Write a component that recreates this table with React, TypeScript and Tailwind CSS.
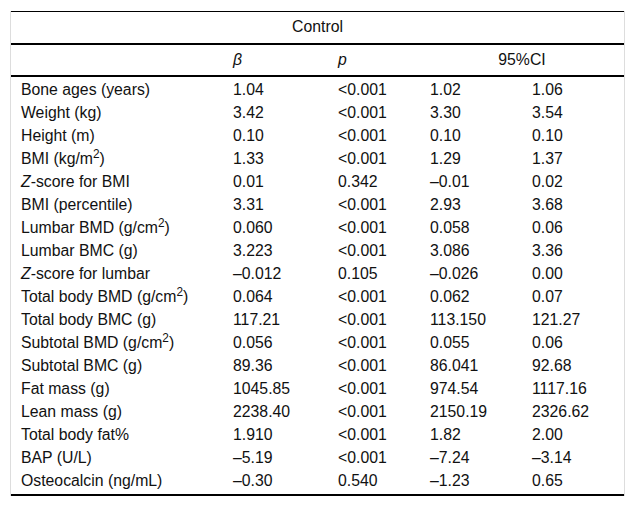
const rows: [React.ReactNode, string, string, string, string][] = [
  ["Bone ages (years)", "1.04", "<0.001", "1.02", "1.06"],
  ["Weight (kg)", "3.42", "<0.001", "3.30", "3.54"],
  ["Height (m)", "0.10", "<0.001", "0.10", "0.10"],
  [<>BMI (kg/m<sup>2</sup>)</>, "1.33", "<0.001", "1.29", "1.37"],
  [<><i>Z</i>-score for BMI</>, "0.01", "0.342", "–0.01", "0.02"],
  ["BMI (percentile)", "3.31", "<0.001", "2.93", "3.68"],
  [<>Lumbar BMD (g/cm<sup>2</sup>)</>, "0.060", "<0.001", "0.058", "0.06"],
  ["Lumbar BMC (g)", "3.223", "<0.001", "3.086", "3.36"],
  [<><i>Z</i>-score for lumbar</>, "–0.012", "0.105", "–0.026", "0.00"],
  [<>Total body BMD (g/cm<sup>2</sup>)</>, "0.064", "<0.001", "0.062", "0.07"],
  ["Total body BMC (g)", "117.21", "<0.001", "113.150", "121.27"],
  [<>Subtotal BMD (g/cm<sup>2</sup>)</>, "0.056", "<0.001", "0.055", "0.06"],
  ["Subtotal BMC (g)", "89.36", "<0.001", "86.041", "92.68"],
  ["Fat mass (g)", "1045.85", "<0.001", "974.54", "1117.16"],
  ["Lean mass (g)", "2238.40", "<0.001", "2150.19", "2326.62"],
  ["Total body fat%", "1.910", "<0.001", "1.82", "2.00"],
  ["BAP (U/L)", "–5.19", "<0.001", "–7.24", "–3.14"],
  ["Osteocalcin (ng/mL)", "–0.30", "0.540", "–1.23", "0.65"],
];

export default function App() {
  return (
    <div className="w-[635px] h-[509px] bg-white pt-[11px]">
      <div className="ml-[10px] w-[615px] border-x border-[#dddddd] text-[15.8px] text-[#111]" style={{ fontFamily: '"Liberation Sans", Arial, sans-serif' }}>
        <table className="w-[613px] border-collapse table-fixed">
          <colgroup>
            <col className="w-[212px]" />
            <col className="w-[105px]" />
            <col className="w-[92px]" />
            <col className="w-[102px]" />
            <col className="w-[102px]" />
          </colgroup>
          <thead>
            <tr className="border-t border-b-2 border-black h-[32px]">
              <th colSpan={5} className="font-normal text-center p-0">Control</th>
            </tr>
            <tr className="border-b-2 border-black h-[32px]">
              <th className="p-0"></th>
              <th className="font-normal italic text-left pl-[10px]">β</th>
              <th className="font-normal italic text-left pl-[10px]">p</th>
              <th colSpan={2} className="font-normal text-center p-0">95%CI</th>
            </tr>
          </thead>
          <tbody className="border-b-2 border-black">
            {rows.map((r, i) => (
              <tr
                key={i}
                className={
                  i === 0
                    ? "h-[25px] align-bottom"
                    : i === rows.length - 1
                      ? "h-[26px] align-top"
                      : "h-[23px]"
                }
              >
                {r.map((c, j) => (
                  <td key={j} className="pl-[10px] leading-[23px] whitespace-nowrap">{c}</td>
                ))}
              </tr>
            ))}
          </tbody>
        </table>
      </div>
    </div>
  );
}
